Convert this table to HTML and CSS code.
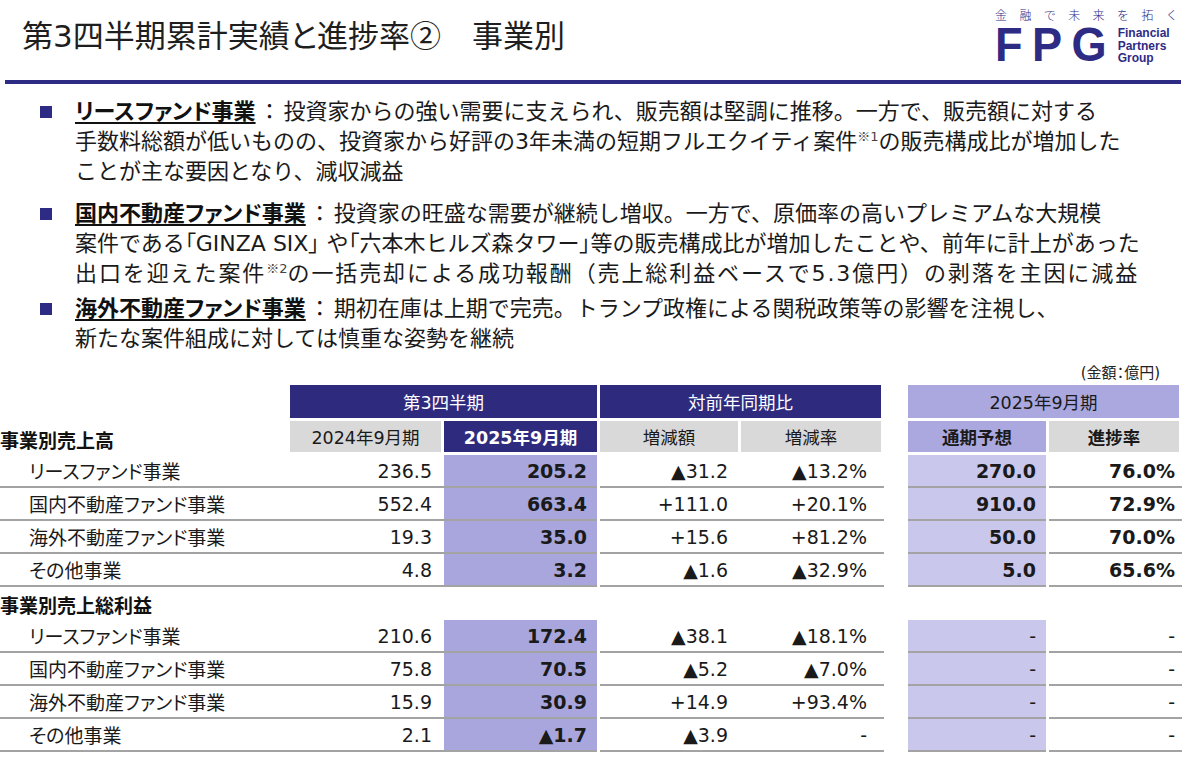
FILE: index.html
```html
<!DOCTYPE html>
<html lang="ja">
<head>
<meta charset="utf-8">
<title>第3四半期累計実績と進捗率② 事業別</title>
<link rel="stylesheet" href="styles.css">
</head>
<body>
<div class="page">
  <header class="head">
    <h1 class="title">第3四半期累計実績と進捗率<span class="cjk">②</span>　事業別</h1>
    <div class="logo">
      <div class="tagline">金融で未来を拓く</div>
      <div class="mark">
        <span class="fpg">FPG</span>
        <span class="fpg-name">Financial<br>Partners<br>Group</span>
      </div>
    </div>
  </header>
  <div class="rule"></div>

  <ul class="bullets">
    <li>
      <span class="sq"></span>
      <p class="btext"><span class="hd">リースファンド事業</span><span class="colon">：</span>投資家からの強い需要に支えられ、販売額は堅調に推移。一方で、販売額に対する<br>手数料総額が低いものの、投資家から好評の3年未満の短期フルエクイティ案件<sup class="note"><span class="cjk">※</span>1</sup>の販売構成比が増加した<br>ことが主な要因となり、減収減益</p>
    </li>
    <li>
      <span class="sq"></span>
      <p class="btext"><span class="hd">国内不動産ファンド事業</span><span class="colon">：</span>投資家の旺盛な需要が継続し増収。一方で、原価率の高いプレミアムな大規模<br>案件である<span class="br">「</span>GINZA SIX<span class="br">」</span> や<span class="br">「</span>六本木ヒルズ森タワー<span class="br">」</span>等の販売構成比が増加したことや、前年に計上があった<br><span class="wide">出口を迎えた案件<sup class="note"><span class="cjk">※</span>2</sup>の一括売却による成功報酬<span class="cjk">（</span>売上総利益ベースで5.3億円<span class="cjk">）</span>の剥落を主因に減益</span></p>
    </li>
    <li>
      <span class="sq"></span>
      <p class="btext"><span class="hd">海外不動産ファンド事業</span><span class="colon">：</span>期初在庫は上期で完売。トランプ政権による関税政策等の影響を注視し、<br>新たな案件組成に対しては慎重な姿勢を継続</p>
    </li>
  </ul>

  <div class="unit">(金額<span class="cjk">：</span>億円)</div>

  <div class="tbl">
    <!-- header row 1 -->
    <div class="c"></div>
    <div class="c h hn span2">第3四半期</div>
    <div class="c h hn span2">対前年同期比</div>
    <div class="c"></div>
    <div class="c h hp span2">2025年9月期</div>

    <!-- header row 2 -->
    <div class="c sec">事業別売上高</div>
    <div class="c h hg">2024年9月期</div>
    <div class="c h hn b">2025年9月期</div>
    <div class="c h hg">増減額</div>
    <div class="c h hg">増減率</div>
    <div class="c"></div>
    <div class="c h hp b">通期予想</div>
    <div class="c h hg b">進捗率</div>

    <!-- sales rows -->
    <div class="c r lab">リースファンド事業</div>
    <div class="c r n n1">236.5</div>
    <div class="c r n n2 p1 b">205.2</div>
    <div class="c r n n3">▲31.2</div>
    <div class="c r n n4">▲13.2%</div>
    <div class="c"></div>
    <div class="c r n n6 p2 b">270.0</div>
    <div class="c r n n7 b">76.0%</div>

    <div class="c r lab">国内不動産ファンド事業</div>
    <div class="c r n n1">552.4</div>
    <div class="c r n n2 p1 b">663.4</div>
    <div class="c r n n3">+111.0</div>
    <div class="c r n n4">+20.1%</div>
    <div class="c"></div>
    <div class="c r n n6 p2 b">910.0</div>
    <div class="c r n n7 b">72.9%</div>

    <div class="c r lab">海外不動産ファンド事業</div>
    <div class="c r n n1">19.3</div>
    <div class="c r n n2 p1 b">35.0</div>
    <div class="c r n n3">+15.6</div>
    <div class="c r n n4">+81.2%</div>
    <div class="c"></div>
    <div class="c r n n6 p2 b">50.0</div>
    <div class="c r n n7 b">70.0%</div>

    <div class="c r lab">その他事業</div>
    <div class="c r n n1">4.8</div>
    <div class="c r n n2 p1 b">3.2</div>
    <div class="c r n n3">▲1.6</div>
    <div class="c r n n4">▲32.9%</div>
    <div class="c"></div>
    <div class="c r n n6 p2 b">5.0</div>
    <div class="c r n n7 b">65.6%</div>

    <!-- gross profit section -->
    <div class="c sec full">事業別売上総利益</div>

    <div class="c r lab">リースファンド事業</div>
    <div class="c r n n1">210.6</div>
    <div class="c r n n2 p1 b">172.4</div>
    <div class="c r n n3">▲38.1</div>
    <div class="c r n n4">▲18.1%</div>
    <div class="c"></div>
    <div class="c r n n6 p2">-</div>
    <div class="c r n n7">-</div>

    <div class="c r lab">国内不動産ファンド事業</div>
    <div class="c r n n1">75.8</div>
    <div class="c r n n2 p1 b">70.5</div>
    <div class="c r n n3">▲5.2</div>
    <div class="c r n n4">▲7.0%</div>
    <div class="c"></div>
    <div class="c r n n6 p2">-</div>
    <div class="c r n n7">-</div>

    <div class="c r lab">海外不動産ファンド事業</div>
    <div class="c r n n1">15.9</div>
    <div class="c r n n2 p1 b">30.9</div>
    <div class="c r n n3">+14.9</div>
    <div class="c r n n4">+93.4%</div>
    <div class="c"></div>
    <div class="c r n n6 p2">-</div>
    <div class="c r n n7">-</div>

    <div class="c r lab">その他事業</div>
    <div class="c r n n1">2.1</div>
    <div class="c r n n2 p1 b">▲1.7</div>
    <div class="c r n n3">▲3.9</div>
    <div class="c r n n4">-</div>
    <div class="c"></div>
    <div class="c r n n6 p2">-</div>
    <div class="c r n n7">-</div>
  </div>
</div>
</body>
</html>
```

FILE: styles.css
```css
* { box-sizing: border-box; }
html, body { margin: 0; padding: 0; background: #ffffff; }
body {
  width: 1200px;
  height: 763px;
  overflow: hidden;
  font-family: "DejaVu Sans", "Noto Sans CJK JP", sans-serif;
  color: #1a1a1a;
}
.cjk { font-family: "Noto Sans CJK JP", sans-serif; }

/* ---------- header ---------- */
.head {
  display: flex;
  justify-content: space-between;
  align-items: flex-start;
  height: 80px;
  padding: 0 20px 0 22px;
}
.title {
  margin: 16px 0 0 0;
  font-size: 31px;
  line-height: 40px;
  font-weight: 400;
  color: #1e1e1e;
  font-feature-settings: "palt";
}
.title .cjk { line-height: 1; }
.logo {
  display: flex;
  flex-direction: column;
  align-items: flex-start;
  color: #2e2b84;
  width: 185px;
}
.tagline {
  margin-top: 8px;
  font-family: "Noto Sans CJK JP", sans-serif;
  font-size: 12px;
  line-height: 14px;
  font-weight: 300;
  letter-spacing: 12.4px;
  white-space: nowrap;
}
.mark {
  display: flex;
  align-items: flex-start;
  margin-top: 2px;
  height: 42px;
}
.fpg {
  font-family: "Liberation Sans", sans-serif;
  font-weight: 700;
  font-size: 48px;
  line-height: 42px;
  letter-spacing: 10px;
  transform: scaleX(0.94);
  transform-origin: left center;
  margin-right: -6px;
}
.fpg-name {
  font-family: "Liberation Sans", sans-serif;
  font-weight: 700;
  font-size: 12px;
  line-height: 12.5px;
  padding-top: 3px;
}
.rule {
  margin-left: 5px;
  width: 1176px;
  height: 4px;
  background: #2e2b84;
}

/* ---------- bullets ---------- */
.bullets {
  list-style: none;
  margin: 13px 0 0 0;
  padding: 0;
}
.bullets li {
  display: flex;
  align-items: flex-start;
  padding-left: 40px;
}
.bullets li:nth-child(1) { margin-bottom: 12px; }
.bullets li:nth-child(2) { margin-bottom: 5px; }
.sq {
  flex: none;
  width: 12px;
  height: 12px;
  margin-top: 9px;
  margin-right: 23px;
  background: #2e2b84;
}
.btext {
  margin: 0;
  font-size: 22px;
  line-height: 30px;
  white-space: nowrap;
  color: #1a1a1a;
}
.btext .cjk, .btext .colon, .btext .br { line-height: 1; }
.br {
  font-family: "Noto Sans CJK JP", sans-serif;
  font-feature-settings: "palt";
}
.hd {
  font-weight: 700;
  text-decoration: underline;
  text-decoration-thickness: 1.5px;
  text-underline-offset: 3px;
  color: #111;
  font-feature-settings: "palt";
}
.colon {
  font-family: "Noto Sans CJK JP", sans-serif;
  margin: 0 3px;
}
.wide { letter-spacing: 1.9px; }
.note {
  font-size: 13px;
  line-height: 0;
  vertical-align: 8px;
  letter-spacing: 0;
  color: #444;
}
.note .cjk { line-height: 0; }

/* ---------- table ---------- */
.unit {
  margin-top: 10px;
  height: 18px;
  line-height: 18px;
  font-size: 15px;
  text-align: right;
  padding-right: 40px;
  color: #222;
  font-feature-settings: "palt";
}
.unit .cjk { line-height: 1; }
.tbl {
  margin-top: 3px;
  display: grid;
  grid-template-columns: 290px 154px 156px 141px 143px 24px 141px 133px;
  grid-template-rows: 36px 34px repeat(4, 33px) 33px repeat(4, 33px);
  font-size: 19px;
  font-feature-settings: "palt";
}
.c {
  display: flex;
  align-items: center;
  min-width: 0;
  white-space: nowrap;
}
.span2 { grid-column: span 2; }
.full { grid-column: 1 / -1; }
.h {
  justify-content: center;
  margin: 0 3px 3px 0;
  font-size: 17.5px;
}
.hn { background: #2e2b7f; color: #ffffff; }
.hg { background: #d9d9d9; color: #1a1a1a; }
.hp { background: #aaa8df; color: #1a1a1a; }
.b { font-weight: 700; }
.sec {
  font-weight: 700;
  font-size: 19px;
  color: #111;
  padding-top: 2px;
}
.r { border-bottom: 2px solid #a3a3a3; }
.lab { padding-left: 29px; color: #1a1a1a; }
.n { justify-content: flex-end; }
.n1 { padding-right: 12px; }
.n2 { padding-right: 10px; margin-right: 3px; }
.n3 { padding-right: 13px; }
.n4 { padding-right: 17px; }
.n6 { padding-right: 10px; margin-right: 3px; }
.n7 { padding-right: 7px; }
.p1 { background: #a8a6dd; }
.p2 { background: #c9c7ec; }
```
